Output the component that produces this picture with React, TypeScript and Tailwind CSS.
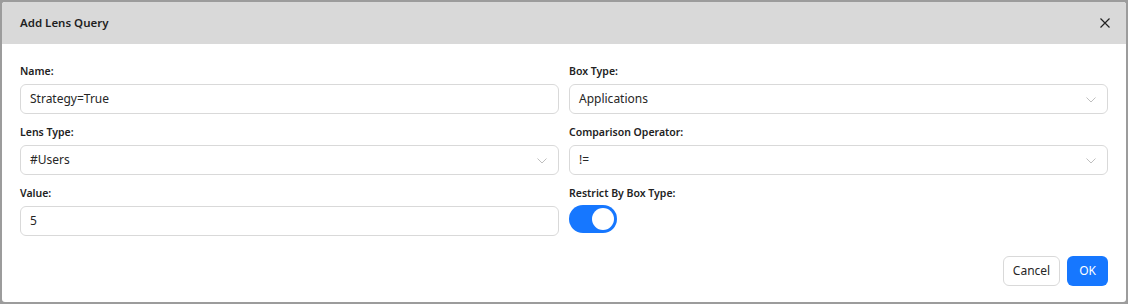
import React from "react";

const font = { fontFamily: '"Noto Sans", "Open Sans", sans-serif' };

function Chevron() {
  return (
    <svg width="10" height="6" viewBox="0 0 10 6" className="absolute right-[11px] top-[12px]">
      <path d="M0.5 0.5 L5 5 L9.5 0.5" fill="none" stroke="#bfbfbf" strokeWidth="1" />
    </svg>
  );
}

function Field({ label, children }: { label: string; children: React.ReactNode }) {
  return (
    <div className="flex flex-col">
      <div className="h-[22px] text-[10.5px] font-semibold text-[#222] leading-[14px] pt-[2px]">{label}</div>
      {children}
    </div>
  );
}

function Box({ value, select }: { value: string; select?: boolean }) {
  return (
    <div className="relative h-[30px] rounded-[6px] border border-[#d9d9d9] bg-white flex items-center pl-[9px] pr-[10px] text-[12px] text-[#262626]">
      {value}
      {select && <Chevron />}
    </div>
  );
}

export default function App() {
  return (
    <div className="w-[1128px] h-[304px] bg-[#9c9c9c] p-[2px]" style={font}>
      <div className="w-full h-full bg-white rounded-[3px] overflow-hidden flex flex-col">
        <div className="h-[42px] bg-[#d9d9d9] flex items-center justify-between pl-[18px] pr-[16px]">
          <span className="text-[11.5px] font-semibold text-[#1f1f1f]">Add Lens Query</span>
          <svg width="10" height="10" viewBox="0 0 10 10">
            <path d="M0.5 0.5 L9.5 9.5 M9.5 0.5 L0.5 9.5" stroke="#222" strokeWidth="1.2" />
          </svg>
        </div>
        <div className="px-[18px] pt-[18px] grid grid-cols-2 gap-x-[10px] gap-y-[9px]">
          <Field label="Name:"><Box value="Strategy=True" /></Field>
          <Field label="Box Type:"><Box value="Applications" select /></Field>
          <Field label="Lens Type:"><Box value="#Users" select /></Field>
          <Field label="Comparison Operator:"><Box value="!=" select /></Field>
          <Field label="Value:"><Box value="5" /></Field>
          <Field label="Restrict By Box Type:">
            <div className="w-[48px] h-[28px] rounded-full bg-[#1677ff] flex items-center justify-end pr-[3px] -mt-[1px]">
              <div className="w-[22px] h-[22px] rounded-full bg-white" />
            </div>
          </Field>
        </div>
        <div className="flex justify-end gap-[7px] px-[18px] mt-[20px]">
          <button className="h-[30px] px-[9px] rounded-[6px] border border-[#d9d9d9] bg-white text-[12px] text-[#262626]">Cancel</button>
          <button className="h-[30px] px-[12px] rounded-[6px] bg-[#1677ff] text-[12px] text-white">OK</button>
        </div>
      </div>
    </div>
  );
}
